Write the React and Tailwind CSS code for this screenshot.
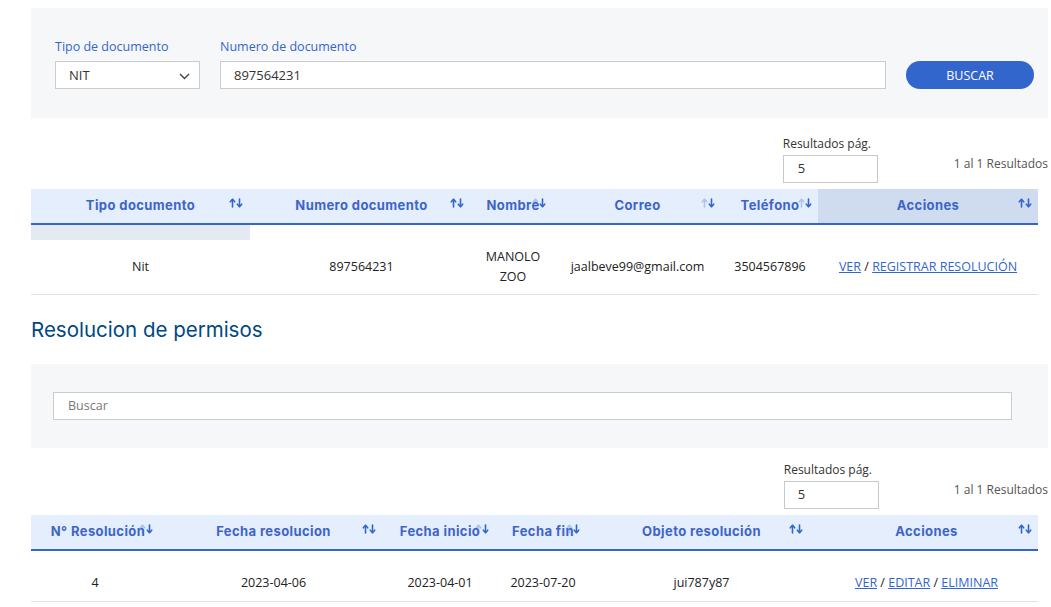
import React from 'react'

const body = { fontFamily: '"Open Sans", "Noto Sans", sans-serif' }
const head = { fontFamily: 'Inter, "Noto Sans", sans-serif' }

// Small sort arrows next to the header labels
const SortIcon = ({ faded }) => (
  <svg width="14" height="10" viewBox="0 0 14 10" fill="none" stroke="#3366cc" strokeWidth="1.6" strokeLinecap="round" strokeLinejoin="round">
    <g opacity={faded ? 0.3 : 1}>
      <path d="M3.5 9V1.5" />
      <path d="M1.3 3.8L3.5 1.3L5.7 3.8" />
    </g>
    <path d="M10.5 1V8.5" />
    <path d="M8.3 6.2L10.5 8.7L12.7 6.2" />
  </svg>
)

const HeaderCell = ({ label, width, faded, dark, right = 'right-[7px]' }) => (
  <th
    style={{ width }}
    className={`relative h-[35px] p-0 text-center text-[13px] font-bold text-[#3d65c8] ${dark ? 'bg-[#cfdcef]' : ''}`}
  >
    <span style={head} className="tracking-[0.4px]">{label}</span>
    <span className={`absolute top-[9px] ${right}`}>
      <SortIcon faded={faded} />
    </span>
  </th>
)

const PageSize = ({ inputLeft, top, gap }) => (
  <div className={`flex justify-end items-start pb-[6px] ${top}`} style={body}>
    <div className="flex flex-col">
      <span className="text-[12px] text-[#333] leading-4 mb-[3px]">Resultados pág.</span>
      <div className={`w-[95px] h-[28px] border border-[#c8c8c8] bg-white text-[13px] text-[#333] flex items-center ${inputLeft}`}>5</div>
    </div>
    <div className={`${gap} mt-[19px] text-[12px] text-[#555]`}>1 al 1 Resultados</div>
  </div>
)

const Link = ({ children }) => <a href="#" className="text-[#3366cc] underline">{children}</a>

export default function App() {
  const cols1 = [
    { label: 'Tipo documento', width: 219 },
    { label: 'Numero documento', width: 223, right: 'right-[9px]' },
    { label: 'Nombre', width: 80, faded: true },
    { label: 'Correo', width: 169, faded: true },
    { label: 'Teléfono', width: 96, faded: true, right: 'right-[6px]' },
    { label: 'Acciones', width: 220, dark: true, right: 'right-[6px]' },
  ]
  const cols2 = [
    { label: 'N° Resolución', width: 134, faded: true, right: 'right-[12px]' },
    { label: 'Fecha resolucion', width: 217, right: 'right-[6px]' },
    { label: 'Fecha inicio', width: 116, faded: true, right: 'right-[9px]' },
    { label: 'Fecha fin', width: 90, faded: true, right: 'right-[8px]' },
    { label: 'Objeto resolución', width: 227, right: 'right-[12px]' },
    { label: 'Acciones', width: 223, right: 'right-[6px]' },
  ]

  return (
    <div className="bg-white min-h-screen pl-[31px] pr-[3px] pt-[8px]" style={body}>
      {/* search panel */}
      <div className="bg-[#f6f7f9] h-[110px] pl-[24px] pr-[14px] pt-[31px] flex items-end pb-[29px] gap-[20px]">
        <div className="flex flex-col">
          <label className="text-[12.5px] text-[#3366cc] leading-4 mb-[6px]">Tipo de documento</label>
          <div className="w-[145px] h-[28px] bg-white border border-[#ccc] flex items-center justify-between pl-[13px] pr-[9px] pt-[2px] text-[13px] text-[#333]">
            <span>NIT</span>
            <svg width="11" height="7" viewBox="0 0 11 7" fill="none" stroke="#444" strokeWidth="1.4"><path d="M1 1l4.5 4.5L10 1" /></svg>
          </div>
        </div>
        <div className="flex flex-col flex-1">
          <label className="text-[12.5px] text-[#3366cc] leading-4 mb-[6px]">Numero de documento</label>
          <div className="h-[28px] bg-white border border-[#ccc] flex items-center pl-[13px] pt-[1px] text-[13px] text-[#333]">897564231</div>
        </div>
        <button className="w-[128px] h-[28px] pt-[3px] rounded-full bg-[#3366cc] text-white text-[12.5px]">BUSCAR</button>
      </div>

      <PageSize inputLeft="pl-[14px]" top="pt-[18px]" gap="ml-[76px]" />

      <table className="border-collapse table-fixed w-[1007px]">
        <thead>
          <tr className="bg-[#e5eefc] border-b-2 border-[#3366cc]">
            {cols1.map(c => <HeaderCell key={c.label} {...c} />)}
          </tr>
        </thead>
        <tbody className="text-[12.5px] text-[#222] text-center">
          <tr>
            <td className="h-[16px] p-0 bg-[#e4eaf1]"></td>
            <td colSpan={5}></td>
          </tr>
          <tr className="border-b border-[#dee2e6] leading-5">
            <td className="py-[7px]">Nit</td>
            <td className="py-[7px]">897564231</td>
            <td className="py-[7px] px-1">MANOLO ZOO</td>
            <td className="py-[7px]">jaalbeve99@gmail.com</td>
            <td className="py-[7px]">3504567896</td>
            <td className="py-[7px]"><Link>VER</Link> / <Link>REGISTRAR RESOLUCIÓN</Link></td>
          </tr>
        </tbody>
      </table>

      <h2 className="mt-[21px] text-[20.5px] text-[#004884] leading-7" style={head}>Resolucion de permisos</h2>

      <div className="mt-[20px] bg-[#f6f7f9] h-[84px] pl-[22px] pr-[36px] flex items-center">
        <div className="w-full h-[28px] bg-white border border-[#ccc] flex items-center pl-[14px] text-[12.5px] text-[#777]">Buscar</div>
      </div>

      <PageSize inputLeft="pl-[13px]" top="pt-[14px]" gap="ml-[75px]" />

      <table className="border-collapse table-fixed w-[1007px]">
        <thead>
          <tr className="bg-[#e5eefc] border-b-2 border-[#3366cc]">
            {cols2.map(c => <HeaderCell key={c.label} {...c} />)}
          </tr>
        </thead>
        <tbody className="text-[12.5px] text-[#222] text-center">
          <tr><td colSpan={6} className="h-[15px] p-0"></td></tr>
          <tr className="border-b border-[#dee2e6] leading-5">
            <td className="py-2 pr-[6px]">4</td>
            <td className="py-2">2023-04-06</td>
            <td className="py-2">2023-04-01</td>
            <td className="py-2">2023-07-20</td>
            <td className="py-2">jui787y87</td>
            <td className="py-2"><Link>VER</Link> / <Link>EDITAR</Link> / <Link>ELIMINAR</Link></td>
          </tr>
        </tbody>
      </table>
    </div>
  )
}
